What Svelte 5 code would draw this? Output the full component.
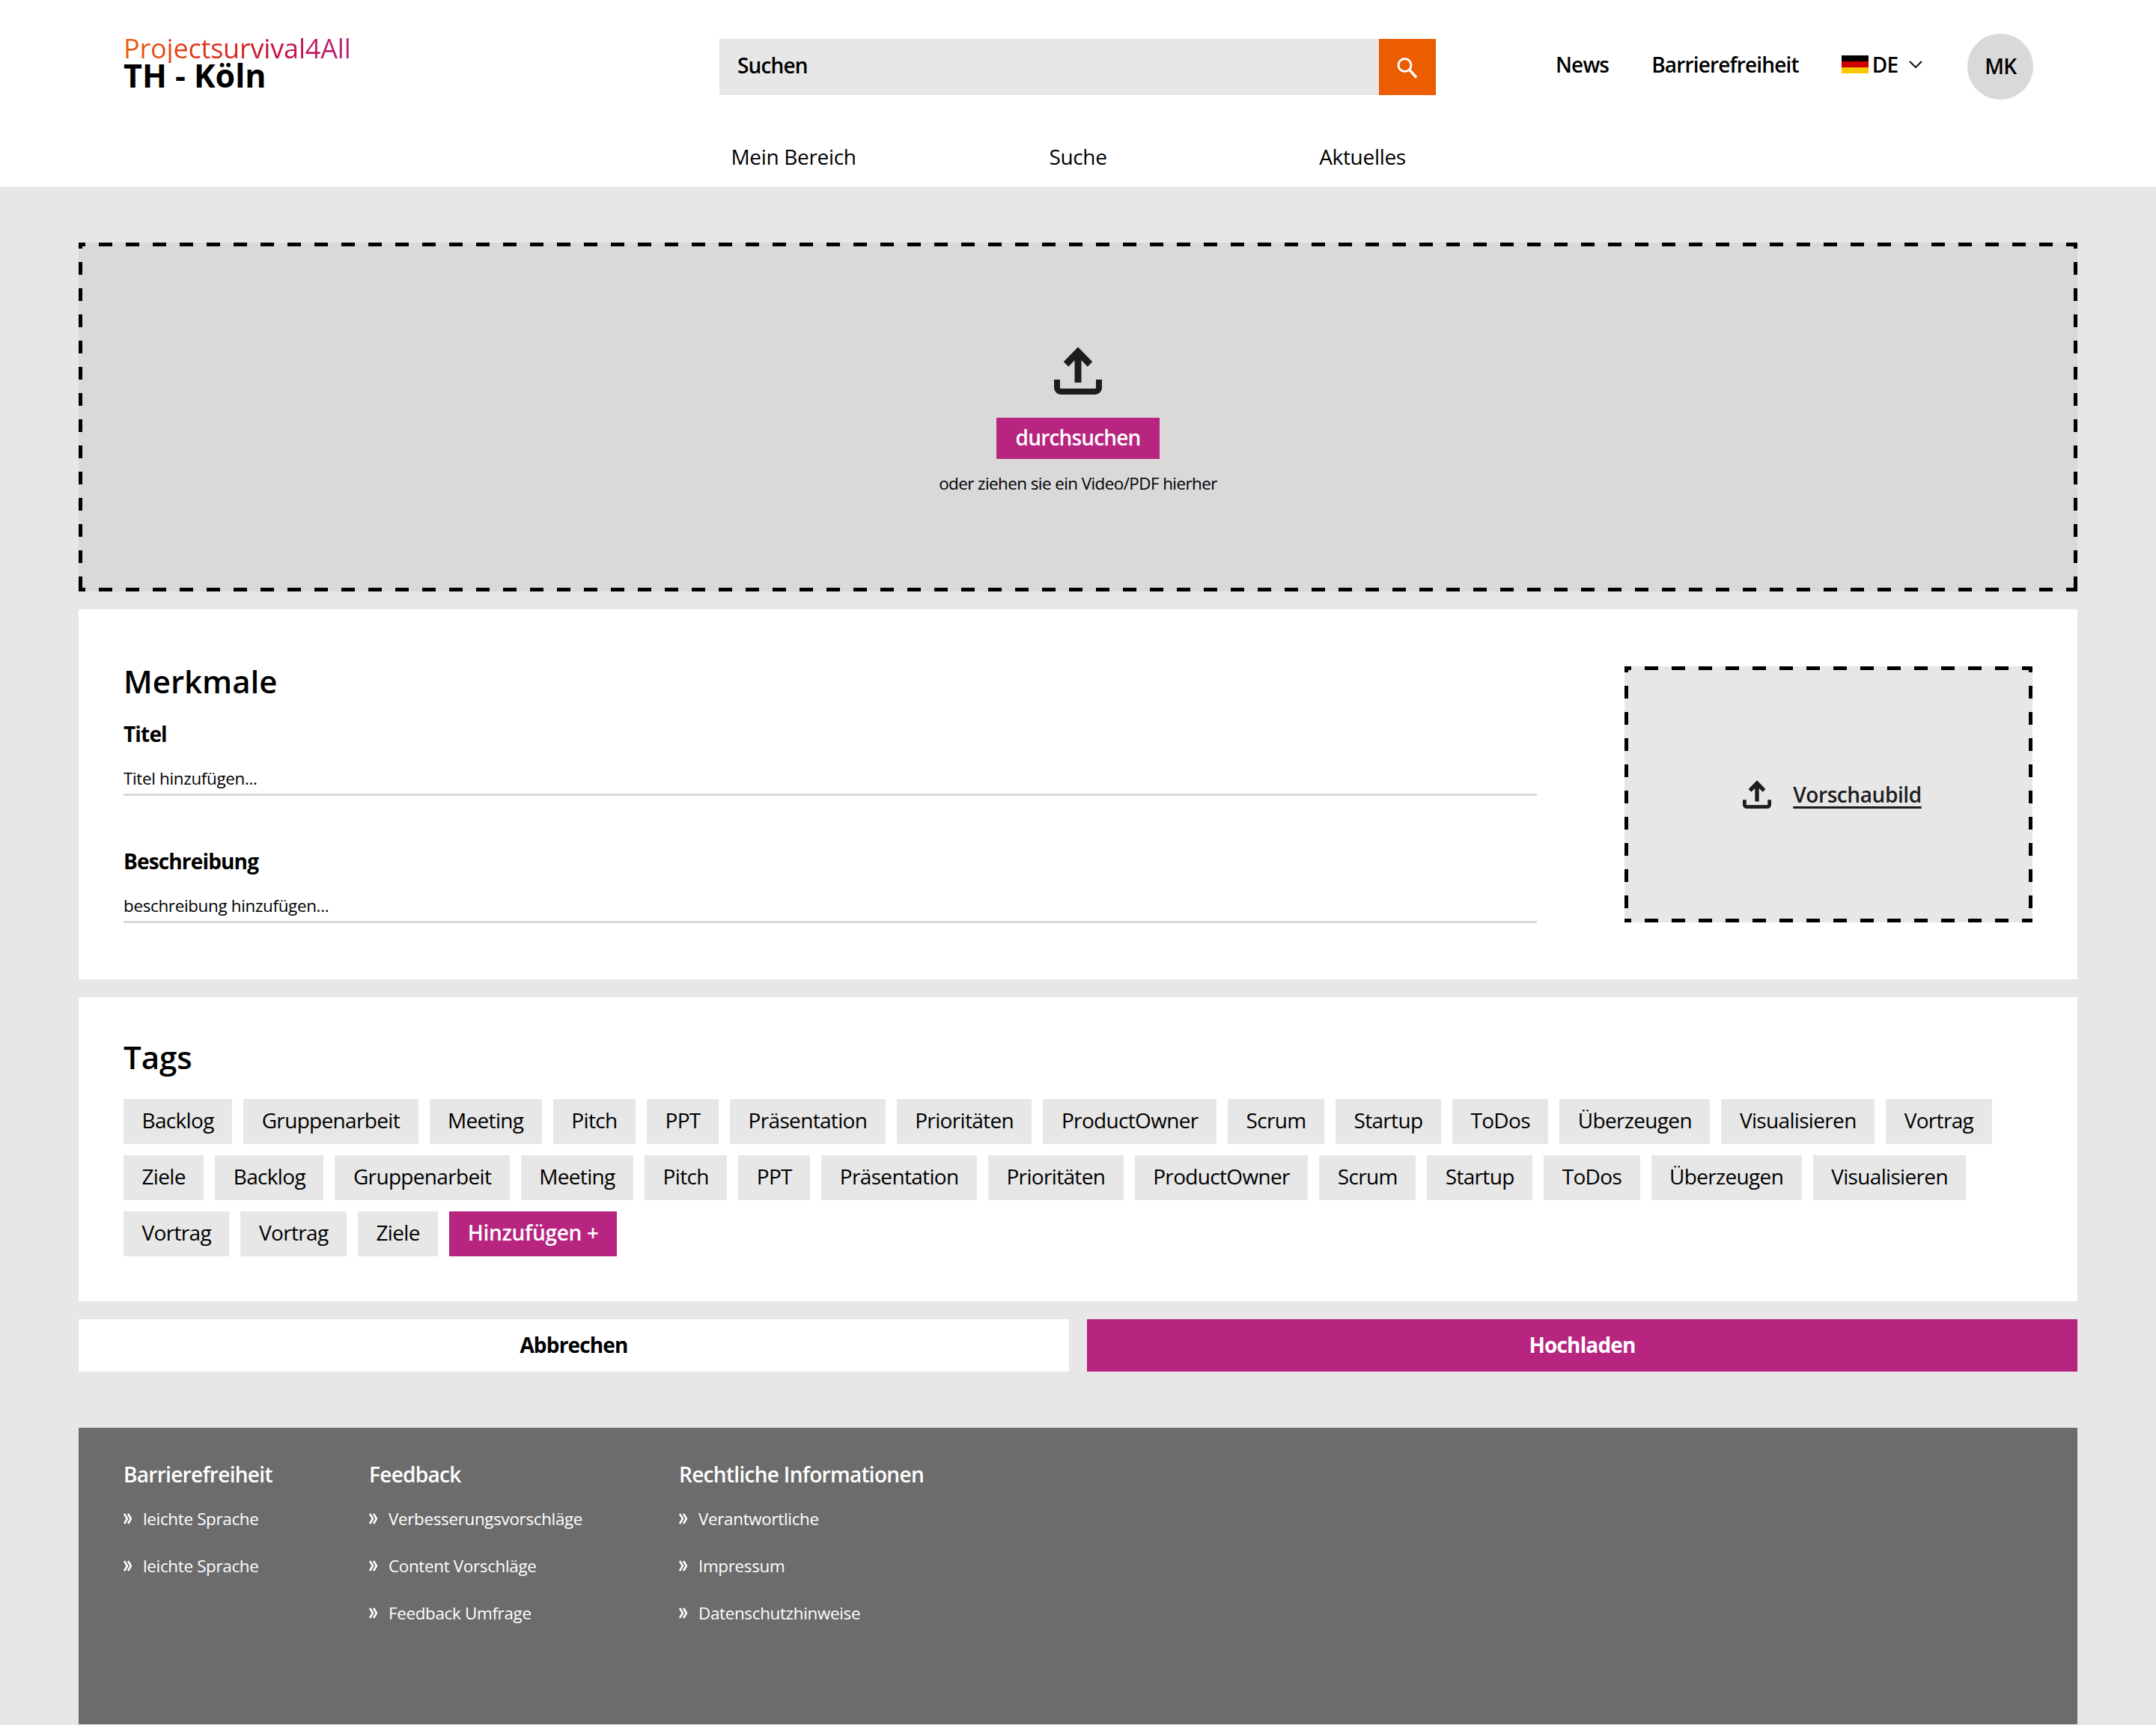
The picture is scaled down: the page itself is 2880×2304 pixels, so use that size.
<script lang="ts">
  const tags = [
    'Backlog', 'Gruppenarbeit', 'Meeting', 'Pitch', 'PPT', 'Präsentation', 'Prioritäten', 'ProductOwner',
    'Scrum', 'Startup', 'ToDos', 'Überzeugen', 'Visualisieren', 'Vortrag', 'Ziele', 'Backlog',
    'Gruppenarbeit', 'Meeting', 'Pitch', 'PPT', 'Präsentation', 'Prioritäten', 'ProductOwner', 'Scrum',
    'Startup', 'ToDos', 'Überzeugen', 'Visualisieren', 'Vortrag', 'Vortrag', 'Ziele'
  ]

  const footerCols = [
    { title: 'Barrierefreiheit', width: 328, links: ['leichte Sprache', 'leichte Sprache'] },
    { title: 'Feedback', width: 414, links: ['Verbesserungsvorschläge', 'Content Vorschläge', 'Feedback Umfrage'] },
    { title: 'Rechtliche Informationen', width: 500, links: ['Verantwortliche', 'Impressum', 'Datenschutzhinweise'] }
  ]
</script>

{#snippet uploadIcon(cls)}
  <svg class={cls} viewBox="0 0 64 64" aria-hidden="true">
    <path d="M32 48V8M16 23.5 32 7l16 16.500" fill="none" stroke="#1d1d20" stroke-width="9" />
    <path d="M4 44v11a5 5 0 0 0 5 5h46a5 5 0 0 0 5-5V44" fill="none" stroke="#1d1d20" stroke-width="8" />
  </svg>
{/snippet}

<header class="header">
  <div class="top-row">
    <div class="logo">
      <div class="logo-project">Projectsurvival4All</div>
      <div class="logo-th">TH - Köln</div>
    </div>

    <div class="search">
      <div class="search-input">Suchen</div>
      <button class="search-btn" aria-label="Suchen">
        <svg width="30" height="30" viewBox="0 0 30 30" aria-hidden="true">
          <circle cx="11.500" cy="12" r="8.500" fill="none" stroke="#fff" stroke-width="3" />
          <path d="M17.500 18 27 28.500" stroke="#fff" stroke-width="3.500" />
        </svg>
      </button>
    </div>

    <nav class="meta-nav">
      <span class="meta-item">News</span>
      <span class="meta-item">Barrierefreiheit</span>
      <span class="meta-item lang">
        <span class="flag"><i class="black"></i><i class="red"></i><i class="gold"></i></span>
        DE
        <svg class="chevron" width="18" height="10" viewBox="0 0 18 10" aria-hidden="true">
          <path d="M1 1l8 8 8-8" fill="none" stroke="#111" stroke-width="2" />
        </svg>
      </span>
      <span class="avatar">MK</span>
    </nav>
  </div>

  <nav class="main-nav">
    <span>Mein Bereich</span>
    <span>Suche</span>
    <span>Aktuelles</span>
  </nav>
</header>

<main class="page">
  <section class="dropzone dashed">
    {@render uploadIcon('icon-lg')}
    <button class="browse">durchsuchen</button>
    <p class="drop-hint">oder ziehen sie ein Video/PDF hierher</p>
  </section>

  <section class="card merkmale">
    <div class="fields">
      <h2>Merkmale</h2>
      <div class="field">
        <div class="field-label">Titel</div>
        <div class="field-input">Titel hinzufügen...</div>
      </div>
      <div class="field second">
        <div class="field-label">Beschreibung</div>
        <div class="field-input">beschreibung hinzufügen...</div>
      </div>
    </div>
    <div class="thumb dashed">
      {@render uploadIcon('icon-sm')}
      <span class="thumb-label">Vorschaubild</span>
    </div>
  </section>

  <section class="card tags-card">
    <h2>Tags</h2>
    <div class="tags">
      {#each tags as tag}
        <span class="tag">{tag}</span>
      {/each}
      <button class="tag tag-add">Hinzufügen +</button>
    </div>
  </section>

  <div class="actions">
    <button class="action cancel">Abbrechen</button>
    <button class="action submit">Hochladen</button>
  </div>

  <footer class="footer">
    {#each footerCols as col}
      <div class="footer-col" style="width: {col.width}px">
        <div class="footer-title">{col.title}</div>
        {#each col.links as link}
          <div class="footer-link">
            <svg width="11" height="15" viewBox="0 0 11 15" aria-hidden="true">
              <path d="M1 1l4 6.500-4 6.500M6 1l4 6.500-4 6.500" fill="none" stroke="#fff" stroke-width="2.600" />
            </svg>
            {link}
          </div>
        {/each}
      </div>
    {/each}
  </footer>
</main>

<style>
  :global(body) {
    margin: 0;
    background: #e7e7e7;
    color: #000;
    font-family: 'Open Sans', 'Noto Sans', sans-serif;
    letter-spacing: -0.02em;
  }

  h2, p {
    margin: 0;
  }

  button {
    border: none;
    padding: 0;
    font: inherit;
    letter-spacing: inherit;
  }

  /* Kopfbereich */
  .header {
    height: 249px;
    box-sizing: border-box;
    background: #fff;
    padding-top: 45px;
  }

  .top-row {
    display: flex;
    align-items: flex-start;
    padding-left: 165px;
  }

  .logo {
    width: 796px;
    box-sizing: border-box;
    padding-top: 1px;
  }

  .logo-project {
    display: inline-block;
    font-size: 36px;
    font-weight: 500;
    letter-spacing: -0.005em;
    line-height: 38px;
    background: linear-gradient(90deg, #ec5c0a 0%, #d8261f 50%, #c8103a 65%, #b72581 100%);
    -webkit-background-clip: text;
    background-clip: text;
    color: transparent;
  }

  .logo-th {
    font-size: 43px;
    font-weight: 700;
    letter-spacing: 0;
    line-height: 34px;
  }

  .search {
    display: flex;
    width: 957px;
    height: 75px;
    margin-top: 7px;
  }

  .search-input {
    flex: 1;
    padding-left: 24px;
    background: #e7e7e7;
    font-size: 28px;
    font-weight: 600;
    letter-spacing: -0.03em;
    line-height: 70px;
  }

  .search-btn {
    display: flex;
    align-items: center;
    justify-content: center;
    width: 76px;
    background: #ec5c00;
  }

  .meta-nav {
    display: flex;
    align-items: center;
    height: 88px;
    margin-left: 160px;
    font-size: 28px;
    font-weight: 600;
    letter-spacing: -0.03em;
  }

  .meta-item {
    margin-right: 57px;
    padding-bottom: 6px;
  }

  .lang {
    display: flex;
    align-items: center;
    gap: 5px;
    margin-right: 60px;
  }

  .flag {
    display: flex;
    flex-direction: column;
    width: 36px;
    height: 24px;
  }

  .flag i {
    flex: 1;
  }

  .black { background: #000; }
  .red { background: #d00000; }
  .gold { background: #f8c800; }

  .chevron {
    margin-left: 10px;
  }

  .avatar {
    display: flex;
    align-items: center;
    justify-content: center;
    flex: none;
    width: 88px;
    height: 88px;
    box-sizing: border-box;
    padding-bottom: 2px;
    border-radius: 50%;
    background: #d9d9d9;
  }

  .main-nav {
    display: grid;
    grid-template-columns: repeat(3, 380px);
    justify-content: center;
    margin-top: 55px;
    font-size: 28px;
    line-height: 42px;
    text-align: center;
  }

  /* Inhalt */
  .page {
    display: flex;
    flex-direction: column;
    gap: 24px;
    padding: 75px 105px 0;
  }

  .dashed {
    background-color: #d9d9d9;
    background-image:
      linear-gradient(90deg, #000 50%, transparent 50%),
      linear-gradient(90deg, #000 50%, transparent 50%),
      linear-gradient(#000 50%, transparent 50%),
      linear-gradient(#000 50%, transparent 50%);
    background-size: 36px 5px, 36px 5px, 5px 35px, 5px 35px;
    background-position: 27px top, 27px bottom, left 0 top 26px, right 0 top 26px;
    background-repeat: repeat-x, repeat-x, repeat-y, repeat-y;
  }

  .dropzone {
    display: flex;
    flex-direction: column;
    align-items: center;
    height: 466px;
    box-sizing: border-box;
    padding-top: 139px;
  }

  .icon-lg {
    width: 64px;
    height: 64px;
  }

  .browse {
    width: 218px;
    height: 55px;
    margin-top: 31px;
    padding-bottom: 3px;
    background: #b72581;
    color: #fff;
    font-size: 28px;
    font-weight: 600;
    letter-spacing: -0.03em;
  }

  .drop-hint {
    margin-top: 17px;
    font-size: 22.400px;
    letter-spacing: -0.025em;
    line-height: 32px;
  }

  .card {
    background: #fff;
    padding: 0 60px;
  }

  h2 {
    font-size: 42px;
    font-weight: 600;
    letter-spacing: 0;
    line-height: 60px;
  }

  .merkmale {
    display: flex;
    justify-content: space-between;
    height: 494px;
    box-sizing: border-box;
    padding-top: 76px;
  }

  .fields {
    width: 1888px;
    margin-top: -10px;
  }

  .field {
    margin-top: 20px;
  }

  .field.second {
    margin-top: 67px;
  }

  .field-label {
    font-size: 28px;
    font-weight: 700;
    letter-spacing: -0.03em;
    line-height: 40px;
  }

  .field-input {
    margin-top: 24px;
    padding-bottom: 4px;
    border-bottom: 3px solid #d9d9d9;
    font-size: 22.400px;
    line-height: 32px;
  }

  .thumb {
    display: flex;
    align-items: center;
    justify-content: center;
    gap: 29px;
    box-sizing: border-box;
    width: 545px;
    height: 342px;
    padding-left: 10px;
    background-color: #e7e7e7;
  }

  .icon-sm {
    width: 38px;
    height: 38px;
  }

  .thumb-label {
    color: #1d1d20;
    font-size: 28px;
    font-weight: 600;
    letter-spacing: -0.015em;
    text-decoration: underline 3px;
    text-underline-offset: 5px;
  }

  .tags-card {
    height: 406px;
    box-sizing: border-box;
    padding-top: 50px;
  }

  .tags {
    display: flex;
    flex-wrap: wrap;
    gap: 15px;
    margin-top: 26px;
  }

  .tag {
    height: 60px;
    padding: 0 24.500px;
    background: #e7e7e7;
    font-size: 28px;
    letter-spacing: -0.024em;
    line-height: 56px;
  }

  .tag-add {
    padding-bottom: 4px;
    background: #b72581;
    color: #fff;
    font-weight: 600;
    letter-spacing: -0.01em;
  }

  .actions {
    display: grid;
    grid-template-columns: 1fr 1fr;
    gap: 24px;
  }

  .action {
    height: 70px;
    font-size: 28px;
    font-weight: 700;
    letter-spacing: -0.03em;
    padding-bottom: 2px;
  }

  .cancel { background: #fff; color: #000; }
  .submit { background: #b72581; color: #fff; }

  /* Fußbereich */
  .footer {
    display: flex;
    height: 396px;
    box-sizing: border-box;
    margin-top: 51px;
    padding: 42px 60px 0;
    background: #6c6c6c;
    color: #fff;
  }

  .footer-title {
    margin-bottom: 8px;
    font-size: 28px;
    font-weight: 600;
    letter-spacing: -0.025em;
    line-height: 40px;
  }

  .footer-link {
    display: flex;
    align-items: center;
    gap: 15px;
    height: 63px;
    font-size: 22.400px;
  }
</style>
